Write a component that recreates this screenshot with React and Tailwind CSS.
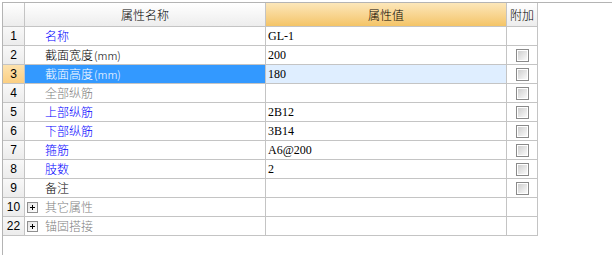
import React from 'react';

const rows = [
  { no: '1', name: '名称', color: 'blue', value: 'GL-1', check: false },
  { no: '2', name: '截面宽度', unit: true, color: 'black', value: '200', check: true },
  { no: '3', name: '截面高度', unit: true, color: 'black', value: '180', check: true, selected: true },
  { no: '4', name: '全部纵筋', color: 'gray', value: '', check: true },
  { no: '5', name: '上部纵筋', color: 'blue', value: '2B12', check: true },
  { no: '6', name: '下部纵筋', color: 'blue', value: '3B14', check: true },
  { no: '7', name: '箍筋', color: 'blue', value: 'A6@200', check: true },
  { no: '8', name: '肢数', color: 'blue', value: '2', check: true },
  { no: '9', name: '备注', color: 'black', value: '', check: true },
  { no: '10', name: '其它属性', color: 'gray', group: true },
  { no: '22', name: '锚固搭接', color: 'gray', group: true },
];

const nameColor = {
  blue: 'text-[#0000ff]',
  black: 'text-black',
  gray: 'text-[#808080]',
};

const CheckBox = () => (
  <div className="w-[13px] h-[13px] border border-[#8a8a8a] bg-white p-px">
    <div className="w-full h-full bg-linear-to-br from-[#cfcfcf] to-[#fafafa]" />
  </div>
);

const PlusBox = () => (
  <div className="relative w-[11px] h-[11px] border border-[#8f8f8f] bg-linear-to-br from-[#e4e4e4] to-[#ffffff]">
    <div className="absolute left-[2px] top-[4px] w-[5px] h-px bg-black" />
    <div className="absolute left-[4px] top-[2px] w-px h-[5px] bg-black" />
  </div>
);

export default function App() {
  return (
    <div className="w-[612px] h-[255px] bg-white pt-[2px] pl-[2px] font-['Noto_Sans_CJK_SC',sans-serif] font-light text-[12px] overflow-hidden">
      <div className="h-[253px] border-t border-l border-[#b4b4b4]">
        {/* header */}
        <div className="flex h-[24px] border-b border-[#c4c4c4] w-[535px]">
          <div className="w-[22px] border-r border-[#c4c4c4] bg-linear-to-b from-[#ffffff] to-[#ececec]" />
          <div className="w-[241px] border-r border-[#c4c4c4] bg-linear-to-b from-[#ffffff] to-[#ededed] flex items-center justify-center text-black">
            属性名称
          </div>
          <div className="w-[241px] border-r border-[#c4c4c4] bg-linear-to-b from-[#fce7b9] to-[#f4c466] flex items-center justify-center text-black">
            属性值
          </div>
          <div className="w-[31px] border-r border-[#c4c4c4] bg-linear-to-b from-[#ffffff] to-[#ededed] flex items-center justify-center text-black">
            附加
          </div>
        </div>

        {rows.map((r) => (
          <div key={r.no} className="flex h-[19px] border-b border-[#c4c4c4] w-[535px]">
            <div
              className={`w-[22px] border-r border-[#c4c4c4] flex items-center justify-center text-black font-['Liberation_Sans',sans-serif] font-normal text-[12px] ${
                r.selected ? 'bg-linear-to-b from-[#fde2ad] to-[#fbcf82]' : 'bg-linear-to-b from-[#f8f8f8] to-[#ececec]'
              }`}
            >
              {r.no}
            </div>
            <div
              className={`w-[241px] border-r border-[#c4c4c4] flex items-center ${
                r.group ? 'pl-[2px]' : 'pl-[20px]'
              } ${r.selected ? 'bg-[#3399ff] text-white' : nameColor[r.color]}`}
            >
              {r.group && (
                <div className="mr-[7px]">
                  <PlusBox />
                </div>
              )}
              <span>{r.name}</span>
              {r.unit && <span className="text-[11px] ml-px">(mm)</span>}
            </div>
            <div
              className={`w-[241px] border-r border-[#c4c4c4] flex items-center pl-[2px] text-black font-['Liberation_Serif','Noto_Sans_CJK_SC',serif] font-normal text-[12px] ${
                r.selected ? 'bg-[#dfeeff]' : ''
              }`}
            >
              {r.value}
            </div>
            <div className="w-[31px] border-r border-[#c4c4c4] flex items-center justify-center">
              {r.check && <CheckBox />}
            </div>
          </div>
        ))}
      </div>
    </div>
  );
}
